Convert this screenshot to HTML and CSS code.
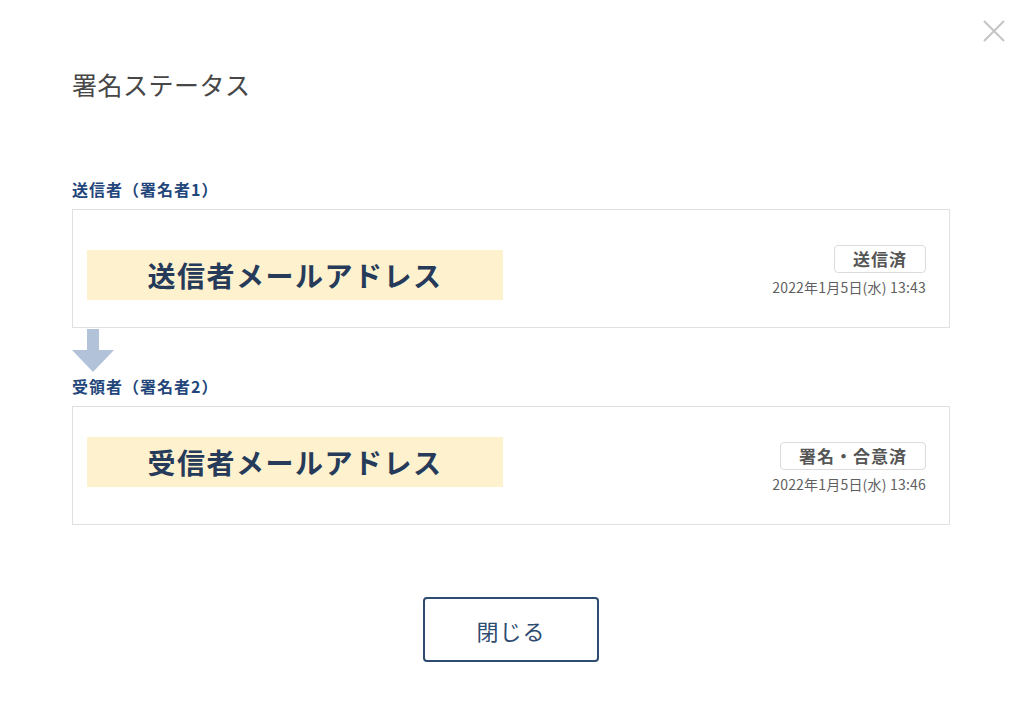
FILE: index.html
```html
<!DOCTYPE html>
<html lang="ja">
<head>
  <meta charset="UTF-8" />
  <meta name="viewport" content="width=device-width, initial-scale=1.0"/>
  <title>署名ステータス</title>

  <link rel="stylesheet" href="styles.css">
</head>

<body>

<div class="modal">

  <!-- CLOSE -->
  <button class="close" aria-label="閉じる">
    <svg width="24" height="24" viewBox="0 0 24 24">
      <path d="M2 2 L22 22 M22 2 L2 22" stroke="#c4c4c4" stroke-width="2" fill="none"/>
    </svg>
  </button>

  <h2 class="modal-title">署名ステータス</h2>

  <!-- SENDER -->
  <div class="signer">
    <p class="signer-label">送信者（署名者1）</p>
    <div class="signer-box">
      <div class="mask mask-top">送信者メールアドレス</div>
      <div class="status">
        <span class="badge">送信済</span>
        <span class="date">2022年1月5日(水) 13:43</span>
      </div>
    </div>
  </div>

  <div class="arrow">
    <svg width="42" height="43" viewBox="0 0 42 43">
      <path d="M15 0 H27 V21 H42 L21 43 L0 21 H15 Z" fill="#b2c3d9"/>
    </svg>
  </div>

  <!-- RECEIVER -->
  <div class="signer">
    <p class="signer-label">受領者（署名者2）</p>
    <div class="signer-box">
      <div class="mask mask-bottom">受信者メールアドレス</div>
      <div class="status">
        <span class="badge">署名・合意済</span>
        <span class="date">2022年1月5日(水) 13:46</span>
      </div>
    </div>
  </div>

  <div class="actions">
    <button class="btn-close">閉じる</button>
  </div>

</div>

</body>
</html>
```

FILE: styles.css
```css
*{
  margin:0;
  padding:0;
  box-sizing:border-box;
  font-family:"Noto Sans CJK JP", "Noto Sans", sans-serif;
}

body{
  background:white;
  color:#444;
}

.modal{
  position:relative;
  width:1024px;
  height:727px;
  padding:67px 74px 0 72px;
}

.close{
  position:absolute;
  top:19px;
  right:18px;
  background:none;
  border:none;
  cursor:pointer;
  display:flex;
}

.modal-title{
  font-size:25px;
  line-height:34px;
  font-weight:normal;
  letter-spacing:0.5px;
  color:#474747;
  margin-bottom:77px;
}

.signer-label{
  font-size:16px;
  line-height:22px;
  font-weight:bold;
  letter-spacing:1px;
  color:#23467a;
  margin-bottom:9px;
}

.signer-box{
  display:flex;
  justify-content:space-between;
  align-items:flex-start;
  height:119px;
  border:1px solid #e0e0e0;
  padding:35px 23px 0 14px;
}

.mask{
  width:416px;
  height:50px;
  background:#fef1cd;
  color:#263a5a;
  font-size:28px;
  font-weight:bold;
  line-height:50px;
  text-align:center;
  letter-spacing:1.5px;
}

.mask-top{
  margin-top:5px;
}

.mask-bottom{
  margin-top:-5px;
}

.status{
  display:flex;
  flex-direction:column;
  align-items:flex-end;
}

.badge{
  height:28px;
  line-height:26px;
  padding:0 18px;
  border:1px solid #dcdcdc;
  border-radius:4px;
  font-size:17px;
  font-weight:bold;
  color:#555;
  letter-spacing:1px;
}

.date{
  margin-top:4px;
  font-size:14px;
  line-height:20px;
  letter-spacing:0.2px;
  color:#5f5f5f;
}

.arrow{
  display:flex;
  padding:1px 0 3px;
}

.arrow + .signer .signer-label{
  margin-bottom:9px;
}

.actions{
  display:flex;
  justify-content:center;
  margin-top:72px;
}

.btn-close{
  width:176px;
  height:65px;
  background:white;
  border:2px solid #2e4b70;
  border-radius:4px;
  font-size:22px;
  letter-spacing:1px;
  color:#2e4b70;
  cursor:pointer;
}
```
